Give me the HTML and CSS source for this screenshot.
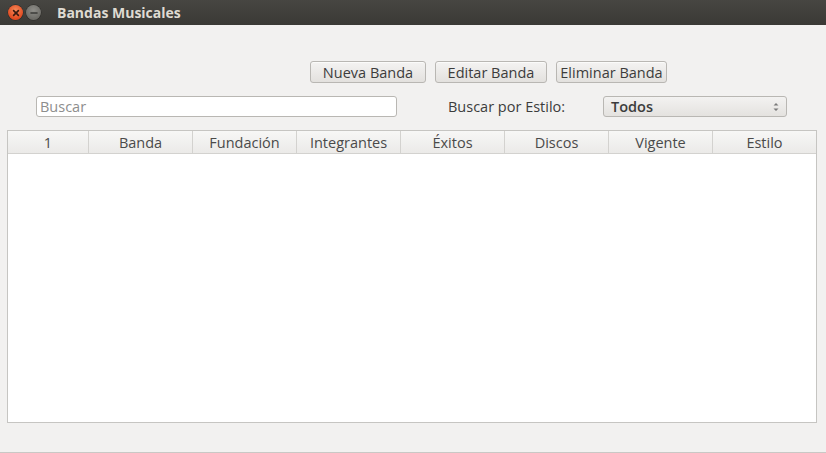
FILE: index.html
```html
<!DOCTYPE html>
<html lang="es">
<head>
<meta charset="utf-8">
<title>Bandas Musicales</title>
<link rel="stylesheet" href="styles.css">
</head>
<body>
<div class="window">
  <div class="titlebar">
    <span class="wbtn close"><svg width="14" height="14" viewBox="0 0 14 14"><path d="M4.6 4.6 L9.4 9.4 M9.4 4.6 L4.6 9.4" stroke="#3a1a10" stroke-width="1.6" stroke-linecap="round"/></svg></span>
    <span class="wbtn minimize"><svg width="14" height="14" viewBox="0 0 14 14"><path d="M4 7 H10" stroke="#3b3b38" stroke-width="1.6" stroke-linecap="round"/></svg></span>
    <span class="title">Bandas Musicales</span>
  </div>
  <div class="content">
    <div class="actions">
      <button class="btn btn-nueva">Nueva Banda</button>
      <button class="btn btn-editar">Editar Banda</button>
      <button class="btn btn-eliminar">Eliminar Banda</button>
    </div>
    <div class="filters">
      <div class="search">Buscar</div>
      <span class="label">Buscar por Estilo:</span>
      <div class="combo">
        <span>Todos</span>
        <svg class="arrows" width="8" height="12" viewBox="0 0 8 12"><path d="M4 2 L6.5 4.5 H1.5 Z M4 10 L6.5 7.5 H1.5 Z" fill="#7a7a7a"/></svg>
      </div>
    </div>
    <div class="table">
      <div class="thead">
        <div class="th first">1</div>
        <div class="th">Banda</div>
        <div class="th">Fundación</div>
        <div class="th">Integrantes</div>
        <div class="th">Éxitos</div>
        <div class="th">Discos</div>
        <div class="th">Vigente</div>
        <div class="th last">Estilo</div>
      </div>
      <div class="tbody"></div>
    </div>
  </div>
</div>
</body>
</html>
```

FILE: styles.css
```css
* { box-sizing: border-box; }
html, body {
  margin: 0;
  padding: 0;
  width: 826px;
  height: 453px;
  overflow: hidden;
  background: #f2f1f0;
  font-family: "Open Sans", "Noto Sans", sans-serif;
  font-size: 14.5px;
  color: #3c3c3c;
}
.window {
  display: flex;
  flex-direction: column;
  height: 453px;
  border-bottom: 1px solid #c9c8c5;
}
.titlebar {
  height: 25px;
  flex: none;
  display: flex;
  align-items: center;
  background: linear-gradient(#474642, #3a3935);
  padding-left: 8px;
}
.wbtn {
  width: 15px;
  height: 15px;
  border-radius: 50%;
  display: flex;
  align-items: center;
  justify-content: center;
}
.wbtn svg { display: block; }
.close {
  background: radial-gradient(circle at 50% 35%, #f58a5a, #e1491f 70%);
  box-shadow: 0 0 0 0.5px #2c2b28;
}
.minimize {
  margin-left: 3px;
  background: radial-gradient(circle at 50% 35%, #8f8e89, #6d6c67 70%);
  box-shadow: 0 0 0 0.5px #2c2b28;
}
.title {
  margin-left: 16px;
  font-weight: bold;
  font-size: 14px;
  color: #dfdbd2;
}
.content {
  flex: 1;
  display: flex;
  flex-direction: column;
  padding: 36px 9px 29px 7px;
}
.actions {
  display: flex;
  padding-left: 303px;
}
.btn {
  height: 22px;
  padding: 0;
  border: 1px solid #b9b7b3;
  border-radius: 3px;
  background: linear-gradient(#f4f3f2, #e3e1de);
  font-family: inherit;
  font-size: 14.5px;
  color: #3c3c3c;
  box-shadow: inset 0 1px 0 #fbfbfa;
}
.btn-nueva { width: 116px; }
.btn-editar { width: 112px; margin-left: 9px; }
.btn-eliminar { width: 111px; margin-left: 9px; }
.filters {
  display: flex;
  align-items: center;
  margin-top: 13px;
  padding-left: 29px;
  height: 21px;
}
.search {
  width: 361px;
  height: 21px;
  border: 1px solid #b9b7b3;
  border-radius: 3px;
  background: #fff;
  color: #8d8d8d;
  padding-left: 3px;
  line-height: 19px;
}
.label {
  margin-left: 51px;
  width: 155px;
}
.combo {
  width: 184px;
  height: 21px;
  border: 1px solid #b9b7b3;
  border-radius: 3px;
  background: linear-gradient(#f3f2f1, #e4e2df);
  display: flex;
  align-items: center;
  justify-content: space-between;
  padding: 0 6px 0 7px;
  font-weight: 600;
  color: #3c3c3c;
}
.arrows { display: block; }
.table {
  margin-top: 13px;
  flex: 1;
  display: flex;
  flex-direction: column;
  border: 1px solid #c6c5c2;
  background: #fff;
}
.thead {
  display: flex;
  height: 23px;
  flex: none;
  background: linear-gradient(#f7f7f6, #ebeae8);
  border-bottom: 1px solid #d3d2cf;
}
.th {
  width: 104px;
  display: flex;
  align-items: center;
  justify-content: center;
  border-right: 1px solid #d3d2cf;
  color: #4a4a4a;
}
.th.first { width: 81px; }
.th.last { border-right: none; flex: 1; }
.tbody { flex: 1; }
```
